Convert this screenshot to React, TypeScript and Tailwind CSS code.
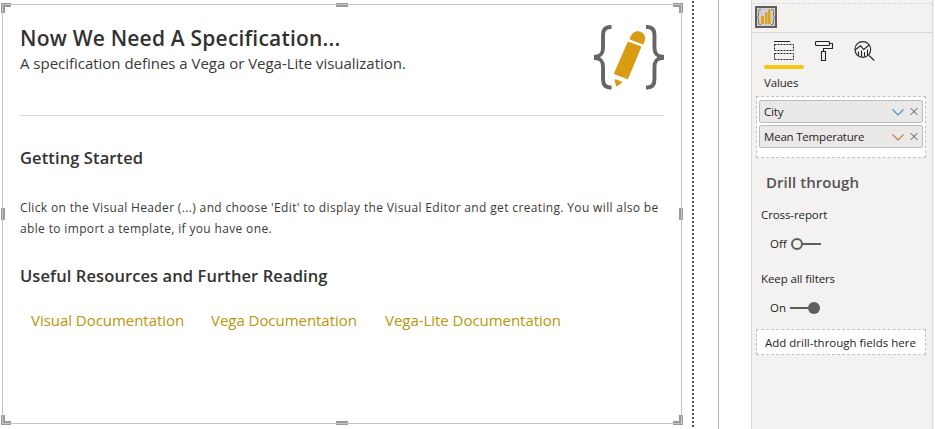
import React from "react";

const FONT = "font-['Open_Sans','Noto_Sans',sans-serif]";

function Corner({ className }: { className: string }) {
  return <span className={`absolute size-[10px] border-[#9a9a9a] ${className}`} />;
}

function SpecLogo() {
  return (
    <svg width="70" height="68" viewBox="0 0 72 68" preserveAspectRatio="none" fill="none" className="shrink-0">
      <g stroke="#666" strokeWidth="4">
        <path d="M18 3.100h-1.500c-5 0-7.200 2.600-7.200 8v12.500c0 6-2.300 8.700-8 9.200v1.200c5.700.5 8 3.200 8 9.200v12c0 5.400 2.200 8.200 7.200 8.200H18" />
        <path d="M53.500 3.100h1.500c5 0 7.200 2.600 7.200 8v12.500c0 6 2.300 8.700 8 9.200v1.200c-5.700.5-8 3.200-8 9.200v12c0 5.400-2.200 8.200-7.200 8.200h-1.500" />
      </g>
      <g fill="#d99b11">
        <path d="M36.900 14.500C38.500 9.500 41.800 7.300 45 7.300c4.200 0 7.600 3.200 7.600 7.300 0 1.900-.8 3.600-1.700 5.200q-.4.800-1.200.5L37.500 15.800q-.9-.4-.6-1.300Z" />
        <path d="M35.800 17.800l12 4.500q1 .4.600 1.400L35.200 54.500q-.4.900-1.300.6L21.200 50.200q-.9-.4-.5-1.300L34.500 18.300q.4-.9 1.300-.5Z" />
        <path d="M22.300 55.300l6 2.300q1 .5.200 1.300l-4.500 3.200q-1 .6-1.400-.4L21.100 56.300q-.1-1.300 1.200-1Z" />
      </g>
    </svg>
  );
}

function Field({ name, chevron }: { name: string; chevron: string }) {
  return (
    <div className="flex h-[23px] items-center rounded-[2px] border border-[#bdbbb9] bg-[#ebe9e8] pl-1 pr-[4px] text-[#252423]">
      <span className="flex-1 text-[11.5px] leading-none tracking-[-0.2px]">{name}</span>
      <svg width="12" height="8" viewBox="0 0 12 8" fill="none" stroke={chevron} strokeWidth="1.100">
        <path d="M.5 1.500 6 7l5.500-5.500" />
      </svg>
      <svg className="ml-[6px]" width="8" height="9" viewBox="0 0 9 9" fill="none" stroke="#55524f" strokeWidth="1.100">
        <path d="m.7.700 7.600 7.600M8.300.700.700 8.300" />
      </svg>
    </div>
  );
}

function VisualCanvas() {
  return (
    <section className="relative ml-[2px] mt-[4px] h-[420px] w-[680px] shrink-0 bg-white pl-[18px] pr-[18px] text-[#333231]">
      <Corner className="-left-px -top-px border-l-4 border-t-4" />
      <Corner className="-right-px -top-px border-r-4 border-t-4" />
      <Corner className="-bottom-px -left-px border-b-4 border-l-4" />
      <Corner className="-bottom-px -right-px border-b-4 border-r-4" />
      <span className="absolute -top-px left-[334px] h-1 w-3 bg-[#9a9a9a]" />
      <span className="absolute -bottom-px left-[334px] h-1 w-3 bg-[#9a9a9a]" />
      <span className="absolute -left-px top-[204px] h-3 w-1 bg-[#9a9a9a]" />
      <span className="absolute -right-px top-[204px] h-3 w-1 bg-[#9a9a9a]" />
      <span className="pointer-events-none absolute inset-0 border border-[#c4c4c4]" />

      <header className="flex h-[112px] justify-between border-b border-[#dcdcdc]">
        <div className="whitespace-nowrap pt-[20px]">
          <h1 className="text-[21px] font-semibold leading-[28px] tracking-[0.2px]">Now We Need A Specification...</h1>
          <p className="text-[15px] leading-[22px] tracking-[-0.02px] text-[#3b3a39]">A specification defines a Vega or Vega-Lite visualization.</p>
        </div>
        <div className="mt-[20px]">
          <SpecLogo />
        </div>
      </header>
      <h2 className="mt-[30px] text-[16.5px] font-semibold leading-[24px] tracking-[0.1px]">Getting Started</h2>
      <p className="mt-[27px] whitespace-nowrap text-[12px] leading-[21px] tracking-[0.35px] text-[#3b3a39]">
        Click on the Visual Header (...) and choose 'Edit' to display the Visual Editor and get creating. You will also be
        <br />
        able to import a template, if you have one.
      </p>
      <h2 className="mt-[25px] text-[16.5px] font-semibold leading-[24px] tracking-[0.1px]">Useful Resources and Further Reading</h2>
      <nav className="mt-[20px] flex whitespace-nowrap pl-[11px] text-[15px] leading-[24px] tracking-[-0.04px] text-[#b8960b]">
        <a className="w-[180px]">Visual Documentation</a>
        <a className="w-[174px]">Vega Documentation</a>
        <a>Vega-Lite Documentation</a>
      </nav>
    </section>
  );
}

function Pane() {
  return (
    <aside className="flex h-[429px] w-[182px] flex-col border-x border-[#dad9d7] bg-[#f3f2f1] text-[11.5px] text-[#252423]">
      <div className="h-[33px] border-b border-[#d8d7d5] pt-[3px]">
        <div className="border-t border-dashed border-[#dad9d7]" />
        <svg width="22" height="22" viewBox="0 0 22 22" className="ml-[3px] mt-[2px]" fill="none">
          <path d="M1 1h20v20H1z" fill="#d2d0ce" stroke="#5f5e5c" strokeWidth="2" />
          <path d="M6 3.500H5q-1.500 0-1.500 2v4L2.500 11l1 1.500v4q0 2 1.500 2h1M16 3.500h1q1.500 0 1.500 2v4l1 1.500-1 1.500v4q0 2-1.500 2h-1" stroke="#777" />
          <path d="M6 10h3v8H6zM10 6.500h2.500V18H10zM13 3.500h2.500V18H13z" fill="#dfa01c" />
        </svg>
      </div>
      <div className="flex h-[32px] pl-[22px] pt-[8px]">
        <svg width="20" height="20" viewBox="0 0 20 20" fill="none" stroke="#252423">
          <path d="M0 .5h16" />
          <path d="M.5 3.500h19v6H.5zM.5 12.500h19v6H.5z" strokeDasharray="2 1" />
        </svg>
        <svg className="ml-[21px]" width="19" height="20" viewBox="0 0 19 20" fill="none" stroke="#252423" strokeWidth="1.100">
          <rect x=".5" y=".5" width="14" height="4" rx="1" />
          <path d="M14.500 2.500h3v5H8.500v3M6.500 10.500h4v9h-4z" />
        </svg>
        <svg className="ml-[20px]" width="21" height="20" viewBox="0 0 21 20" fill="none" stroke="#252423" strokeWidth="1.100">
          <circle cx="8.800" cy="8.500" r="7.900" />
          <path d="m15 14.500 5.300 5M1 9l5.500-4.200 3.200 3.700 5.600-4.700M4.500 10.500v4.300M7.500 9.500v6.300M10.500 11v4.800M13.500 8.500v6" />
        </svg>
      </div>
      <div className="ml-[12px] h-1 w-[40px] shrink-0 rounded-full bg-[#f2c811]" />
      <div className="ml-[12px] mt-[6px] leading-[16px] tracking-[-0.15px]">Values</div>
      <div className="ml-[4px] mt-[5px] flex h-[62px] w-[170px] flex-col gap-[2px] border border-dashed border-[#c3c1bf] bg-white px-[2px] pt-[3px]">
        <Field name="City" chevron="#3f8fd0" />
        <Field name="Mean Temperature" chevron="#c87a35" />
      </div>
      <h3 className="ml-[14px] mt-[13px] text-[15px] font-semibold leading-[22px] tracking-[0.05px] text-[#555351]">Drill through</h3>
      <div className="ml-[9px] mt-[14px] leading-[16px] tracking-[-0.1px]">Cross-report</div>
      <div className="ml-[18px] mt-[13px] flex h-[16px] items-center">
        <span className="w-[21px]">Off</span>
        <svg width="30" height="12" viewBox="0 0 30 12" fill="none" stroke="#605e5c" strokeWidth="2">
          <circle cx="6" cy="6" r="5" />
          <path d="M11 6h19" />
        </svg>
      </div>
      <div className="ml-[9px] mt-[19px] leading-[16px] tracking-[-0.1px]">Keep all filters</div>
      <div className="ml-[18px] mt-[13px] flex h-[16px] items-center">
        <span className="w-[20px]">On</span>
        <svg width="30" height="12" viewBox="0 0 30 12">
          <path d="M0 6h20" stroke="#605e5c" strokeWidth="2" />
          <circle cx="24" cy="6" r="6" fill="#605e5c" />
        </svg>
      </div>
      <div className="ml-[4px] mt-[13px] flex h-[26px] w-[170px] items-center whitespace-nowrap border border-dashed border-[#c3c1bf] bg-white pl-[8px] pt-[2px]">
        Add drill-through fields here
      </div>
    </aside>
  );
}

export default function App() {
  return (
    <main className={`flex h-[429px] w-[935px] overflow-hidden bg-white ${FONT}`}>
      <VisualCanvas />
      <div className="ml-[10px] mt-px h-[426px] w-[2px] shrink-0 bg-[repeating-linear-gradient(to_bottom,#505050_0_2px,transparent_2px_4px)]" />
      <div className="ml-[24px] w-px shrink-0 bg-[#b0b0b0]" />
      <div className="ml-[32px] flex w-[184px] shrink-0 bg-[#f6f5f4]">
        <Pane />
      </div>
    </main>
  );
}
